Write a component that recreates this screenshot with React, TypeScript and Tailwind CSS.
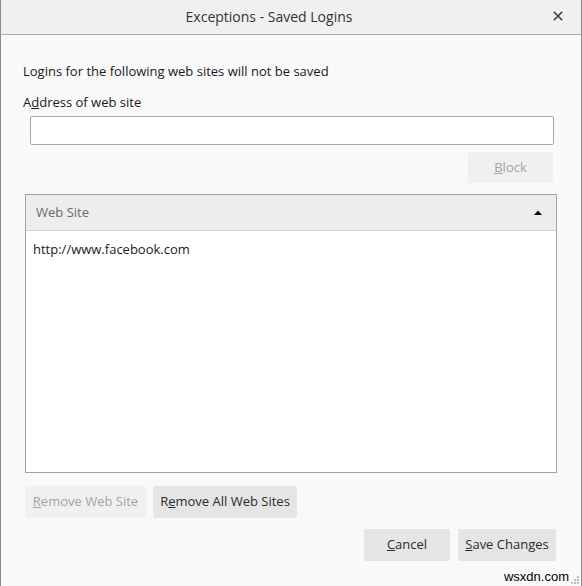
import React from "react";

const font = { fontFamily: '"Open Sans", "Noto Sans", sans-serif' };

export default function App() {
  return (
    <div
      className="w-[582px] h-[586px] bg-[#f9f9f9] border-l border-r border-[#8c8c8c] flex flex-col relative overflow-hidden text-[13px] text-[#1a1a1a]"
      style={font}
    >
      {/* Title bar */}
      <div className="h-[35px] shrink-0 bg-[#f0f0f0] border-b border-[#a9a9a9] flex items-center justify-center relative pr-[44px]">
        <span className="text-[14px] text-[#333] -mt-[1px]">Exceptions - Saved Logins</span>
        <svg
          className="absolute right-[18px] top-[11px]"
          width="10"
          height="10"
          viewBox="0 0 10 10"
        >
          <path d="M0.8 0.8L9.2 9.2M9.2 0.8L0.8 9.2" stroke="#3c3c3c" strokeWidth="1.6" />
        </svg>
      </div>

      {/* Body */}
      <div className="flex flex-col pt-[27px]">
        <div className="ml-[22px] h-[18px] leading-[18px]">Logins for the following web sites will not be saved</div>
        <div className="ml-[22px] mt-[13px] h-[18px] leading-[18px]">
          A<span className="underline">d</span>dress of web site
        </div>
        <div className="ml-[29px] mt-[5px] w-[524px] h-[29px] bg-white border border-[#a6a6a6] rounded-[2px]" />
        <div className="flex justify-end mt-[7px] pr-[28px]">
          <div className="w-[85px] h-[31px] bg-[#f0f0f0] rounded-[2px] flex items-center justify-center text-[#a3a3a3]">
            <span>
              <span className="underline">B</span>lock
            </span>
          </div>
        </div>

        {/* List box */}
        <div className="ml-[24px] mt-[11px] w-[532px] h-[279px] bg-white border border-[#a3a3a3] flex flex-col">
          <div className="h-[36px] shrink-0 bg-[#ededed] border-b border-[#d4d4d4] flex items-center justify-between pl-[10px] pr-[14px]">
            <span className="text-[#6a6a6a]">Web Site</span>
            <svg width="8" height="5" viewBox="0 0 8 5">
              <path d="M0 5L4 0.5L8 5Z" fill="#111" />
            </svg>
          </div>
          <div className="pl-[7px] pt-[9px] leading-[18px]">http://www.facebook.com</div>
        </div>

        {/* Remove buttons */}
        <div className="flex gap-[7px] ml-[24px] mt-[13px]">
          <div className="w-[121px] h-[32px] bg-[#f0f0f0] rounded-[2px] flex items-center justify-center text-[#a3a3a3]">
            <span>
              <span className="underline">R</span>emove Web Site
            </span>
          </div>
          <div className="w-[144px] h-[32px] bg-[#e5e5e5] rounded-[2px] flex items-center justify-center text-[#2b2b2b]">
            <span>
              R<span className="underline">e</span>move All Web Sites
            </span>
          </div>
        </div>

        {/* Dialog buttons */}
        <div className="flex justify-end gap-[8px] mt-[11px] pr-[25px]">
          <div className="w-[86px] h-[32px] bg-[#e5e5e5] rounded-[2px] flex items-center justify-center text-[#2b2b2b]">
            <span>
              <span className="underline">C</span>ancel
            </span>
          </div>
          <div className="w-[98px] h-[32px] bg-[#e5e5e5] rounded-[2px] flex items-center justify-center text-[#2b2b2b]">
            <span>
              <span className="underline">S</span>ave Changes
            </span>
          </div>
        </div>
      </div>

      {/* Watermark + resize grip */}
      <div className="absolute right-[1px] bottom-[1px] flex items-end gap-[2px]">
        <span className="text-[13px] text-black leading-[16px]" style={{ fontFamily: '"Liberation Sans", Arial, sans-serif' }}>
          wsxdn.com
        </span>
        <svg width="9" height="10" viewBox="0 0 9 10">
          <rect x="6" y="1" width="2" height="2" fill="#bcbcbc" />
          <rect x="3" y="4" width="2" height="2" fill="#bcbcbc" />
          <rect x="6" y="4" width="2" height="2" fill="#bcbcbc" />
          <rect x="0" y="7" width="2" height="2" fill="#bcbcbc" />
          <rect x="3" y="7" width="2" height="2" fill="#bcbcbc" />
          <rect x="6" y="7" width="2" height="2" fill="#bcbcbc" />
        </svg>
      </div>
    </div>
  );
}
